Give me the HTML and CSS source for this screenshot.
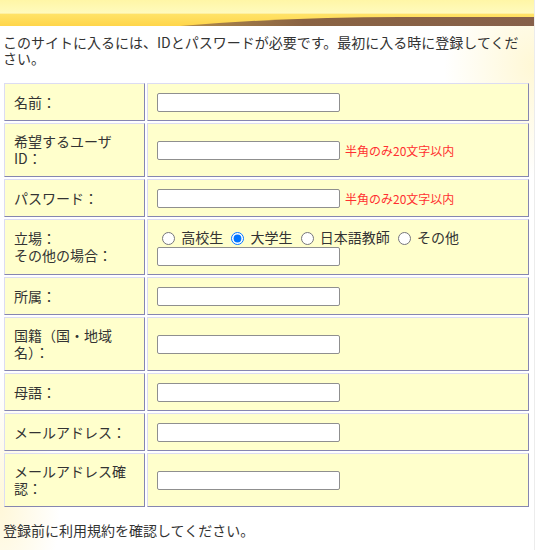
FILE: index.html
```html
<!DOCTYPE html>
<html lang="ja">
<head>
<meta charset="utf-8">
<title>登録</title>
<link rel="stylesheet" href="styles.css">
</head>
<body>
<div class="page">
  <header class="banner">
    <svg width="534" height="26" viewBox="0 0 534 26">
      <defs>
        <linearGradient id="lite" x1="0" y1="0" x2="0" y2="1">
          <stop offset="0" stop-color="#fff6a6"/>
          <stop offset="1" stop-color="#fffbbf"/>
        </linearGradient>
        <linearGradient id="gold" x1="0" y1="0" x2="0" y2="1">
          <stop offset="0" stop-color="#ffe46a"/>
          <stop offset="1" stop-color="#ffd54a"/>
        </linearGradient>
        <linearGradient id="brown" x1="0" y1="0" x2="1" y2="0">
          <stop offset="0" stop-color="#b08a4a"/>
          <stop offset="0.35" stop-color="#8a6343"/>
          <stop offset="1" stop-color="#86604a"/>
        </linearGradient>
      </defs>
      <rect x="0" y="0" width="534" height="14" fill="url(#lite)"/>
      <rect x="0" y="13" width="534" height="13" fill="url(#gold)"/>
      <rect x="0" y="13" width="534" height="1" fill="#fff0a0"/>
      <path d="M180 26 Q290 17 400 17 L534 17 L534 26 Z" fill="url(#brown)"/>
    </svg>
  </header>

  <p class="intro">このサイトに入るには、IDとパスワードが必要です。最初に入る時に登録してください。</p>

  <table class="form">
    <tr>
      <th>名前：</th>
      <td><div class="field"><input type="text"></div></td>
    </tr>
    <tr>
      <th>希望するユーザID：</th>
      <td><div class="field"><input type="text"><span class="note">半角のみ20文字以内</span></div></td>
    </tr>
    <tr>
      <th>パスワード：</th>
      <td><div class="field"><input type="password"><span class="note">半角のみ20文字以内</span></div></td>
    </tr>
    <tr>
      <th>立場：<br>その他の場合：</th>
      <td>
        <div class="radios"><input type="radio" name="role"> 高校生 <input type="radio" name="role" checked> 大学生 <input type="radio" name="role"> 日本語教師 <input type="radio" name="role"> その他</div>
        <div class="field"><input type="text"></div>
      </td>
    </tr>
    <tr>
      <th>所属：</th>
      <td><div class="field"><input type="text"></div></td>
    </tr>
    <tr>
      <th>国籍（国・地域名）：</th>
      <td><div class="field"><input type="text"></div></td>
    </tr>
    <tr>
      <th>母語：</th>
      <td><div class="field"><input type="text"></div></td>
    </tr>
    <tr>
      <th>メールアドレス：</th>
      <td><div class="field"><input type="text"></div></td>
    </tr>
    <tr>
      <th>メールアドレス確認：</th>
      <td><div class="field"><input type="text"></div></td>
    </tr>
  </table>

  <p class="outro">登録前に利用規約を確認してください。</p>
</div>
</body>
</html>
```

FILE: styles.css
```css
html, body {
  margin: 0;
  padding: 0;
  background: #ffffff;
}

body {
  font-family: "Noto Sans CJK JP", "Noto Sans", sans-serif;
  font-size: 14px;
  line-height: 17px;
  color: #333333;
}

.page {
  width: 534px;
  min-height: 550px;
  border-right: 1px solid #ececec;
  background:
    radial-gradient(ellipse 90px 110px at 100% 12%, rgba(255, 243, 185, 0.6), rgba(255, 243, 185, 0) 100%),
    radial-gradient(ellipse 60px 120px at 0% 92%, rgba(255, 238, 170, 0.45), rgba(255, 238, 170, 0) 100%),
    #ffffff;
}

.banner {
  height: 26px;
  overflow: hidden;
}

.banner svg {
  display: block;
}

.intro {
  margin: 8px 0 15px;
  padding: 0 3px;
  line-height: 16px;
}

.form {
  border-collapse: separate;
  border-spacing: 2px;
  width: 529px;
  margin-left: 2px;
}

.form th,
.form td {
  background: #ffffcc;
  border: 1px solid;
  border-color: #dcdcf2 #8686b0 #8686b0 #dcdcf2;
  padding: 9px 9px;
  vertical-align: middle;
  text-align: left;
  font-weight: normal;
}

.form th {
  width: 121px;
}

.field {
  display: flex;
  align-items: center;
  height: 18px;
}

.field input {
  box-sizing: border-box;
  width: 183px;
  height: 19px;
  margin: 0;
  padding: 1px 3px;
  border: 1px solid #8f8f8f;
  border-radius: 2px;
  background: #ffffff;
  font: inherit;
  font-size: 13px;
}

.note {
  margin-left: 5px;
  color: #ff3030;
  font-size: 12px;
}

.radios {
  height: 18px;
  white-space: nowrap;
}

.radios input {
  width: 13px;
  height: 13px;
  margin: 3px 3px 0 5px;
  vertical-align: -2px;
}

.outro {
  margin: 13px 0 0;
  padding: 0 3px;
}
```
